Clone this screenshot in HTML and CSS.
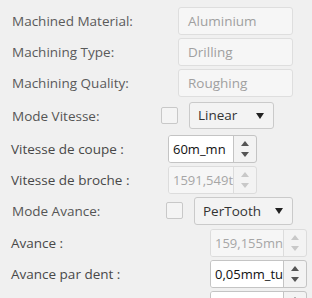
FILE: index.html
```html
<!DOCTYPE html>
<html lang="fr">
<head>
  <meta charset="UTF-8" />
  <meta name="viewport" content="width=device-width, initial-scale=1.0"/>
  <title>Paramètres d'usinage</title>
  <link rel="stylesheet" href="styles.css">
</head>
<body>
  <div class="panel">
    <div class="row info">
      <label>Machined Material:</label>
      <span class="field">Aluminium</span>
    </div>
    <div class="row info">
      <label>Machining Type:</label>
      <span class="field">Drilling</span>
    </div>
    <div class="row info">
      <label>Machining Quality:</label>
      <span class="field">Roughing</span>
    </div>

    <div class="row mode vitesse">
      <label>Mode Vitesse:</label>
      <span class="check"></span>
      <span class="select">Linear<i class="caret"></i></span>
    </div>
    <div class="row spin-row vitesse">
      <label>Vitesse de coupe :</label>
      <div class="spinner">
        <span class="value">60m_mn</span>
        <span class="btns"><i class="up"></i><i class="down"></i></span>
      </div>
    </div>
    <div class="row spin-row vitesse">
      <label>Vitesse de broche :</label>
      <div class="spinner disabled">
        <span class="value">1591,549t</span>
        <span class="btns"><i class="up"></i><i class="down"></i></span>
      </div>
    </div>

    <div class="row mode avance">
      <label>Mode Avance:</label>
      <span class="check"></span>
      <span class="select">PerTooth<i class="caret"></i></span>
    </div>
    <div class="row spin-row avance">
      <label>Avance :</label>
      <div class="spinner disabled">
        <span class="value">159,155mn</span>
        <span class="btns"><i class="up"></i><i class="down"></i></span>
      </div>
    </div>
    <div class="row spin-row avance">
      <label>Avance par dent :</label>
      <div class="spinner">
        <span class="value">0,05mm_tu</span>
        <span class="btns"><i class="up"></i><i class="down"></i></span>
      </div>
    </div>
    <div class="row spin-row avance">
      <label></label>
      <div class="spinner">
        <span class="value"></span>
        <span class="btns"><i class="up"></i><i class="down"></i></span>
      </div>
    </div>
  </div>
</body>
</html>
```

FILE: styles.css
```css
body {
  font-family: 'Open Sans', 'Noto Sans', sans-serif;
  font-size: 13.5px;
  background: #f0f0f0;
  margin: 0;
  padding: 7px 0 0 0;
  overflow: hidden;
}
.panel {
  display: flex;
  flex-direction: column;
}
.row {
  display: flex;
  align-items: center;
  height: 28px;
  padding-left: 12px;
  margin-top: 3px;
}
.row:first-child {
  margin-top: 0;
}
.row label {
  flex: none;
  color: #555;
}
.info label {
  width: 166px;
  color: #5a5a5a;
}
.field {
  box-sizing: border-box;
  width: 115px;
  height: 28px;
  line-height: 26px;
  padding-left: 9px;
  border: 1px solid #dedede;
  border-radius: 3px;
  background: #f6f6f6;
  color: #a0a0a0;
}
.mode {
  height: 27px;
}
.mode.vitesse {
  margin-top: 5px;
}
.mode.vitesse label {
  width: 149px;
}
.mode.avance label {
  width: 154px;
}
.check {
  box-sizing: border-box;
  width: 17px;
  height: 17px;
  border: 1px solid #c8c8c8;
  border-radius: 2px;
  background: #f4f4f4;
}
.select {
  position: relative;
  box-sizing: border-box;
  height: 27px;
  line-height: 25px;
  margin-left: 11px;
  padding-left: 8px;
  border: 1px solid #cacaca;
  border-radius: 3px;
  background: #f3f3f3;
  color: #333;
}
.vitesse .select {
  width: 85px;
}
.avance .select {
  width: 99px;
  height: 28px;
  line-height: 26px;
}
.caret {
  position: absolute;
  right: 9px;
  top: 10px;
  border-left: 4px solid transparent;
  border-right: 4px solid transparent;
  border-top: 6px solid #222;
}
.spin-row {
  padding-left: 11px;
}
.spin-row label {
  color: #484848;
}
.spin-row.vitesse label {
  width: 157px;
}
.spin-row.avance label {
  width: 199px;
}
.mode.avance + .spin-row {
  margin-top: 5px;
}
.mode.vitesse + .spin-row {
  margin-top: 6px;
}
.spinner {
  display: flex;
  box-sizing: border-box;
  height: 28px;
  border: 1px solid #c4c4c4;
  border-radius: 3px;
  background: #f3f3f3;
  overflow: hidden;
}
.spinner .value {
  box-sizing: border-box;
  padding-left: 4px;
  font-size: 13px;
  line-height: 26px;
  background: #fff;
  color: #111;
  white-space: nowrap;
  overflow: hidden;
  border-right: 1px solid #c4c4c4;
}
.vitesse .spinner .value {
  width: 65px;
}
.avance .spinner .value {
  width: 73px;
}
.btns {
  width: 22px;
  display: flex;
  flex-direction: column;
  align-items: center;
  justify-content: center;
  gap: 6px;
}
.btns .up {
  border-left: 4px solid transparent;
  border-right: 4px solid transparent;
  border-bottom: 5px solid #555;
}
.btns .down {
  border-left: 4px solid transparent;
  border-right: 4px solid transparent;
  border-top: 5px solid #555;
}
.spinner.disabled {
  border-color: #dcdcdc;
}
.spinner.disabled .value {
  background: #f6f6f6;
  color: #a6a6a6;
  border-right-color: #dcdcdc;
}
.spinner.disabled .btns .up {
  border-bottom-color: #c8c8c8;
}
.spinner.disabled .btns .down {
  border-top-color: #c8c8c8;
}
```
